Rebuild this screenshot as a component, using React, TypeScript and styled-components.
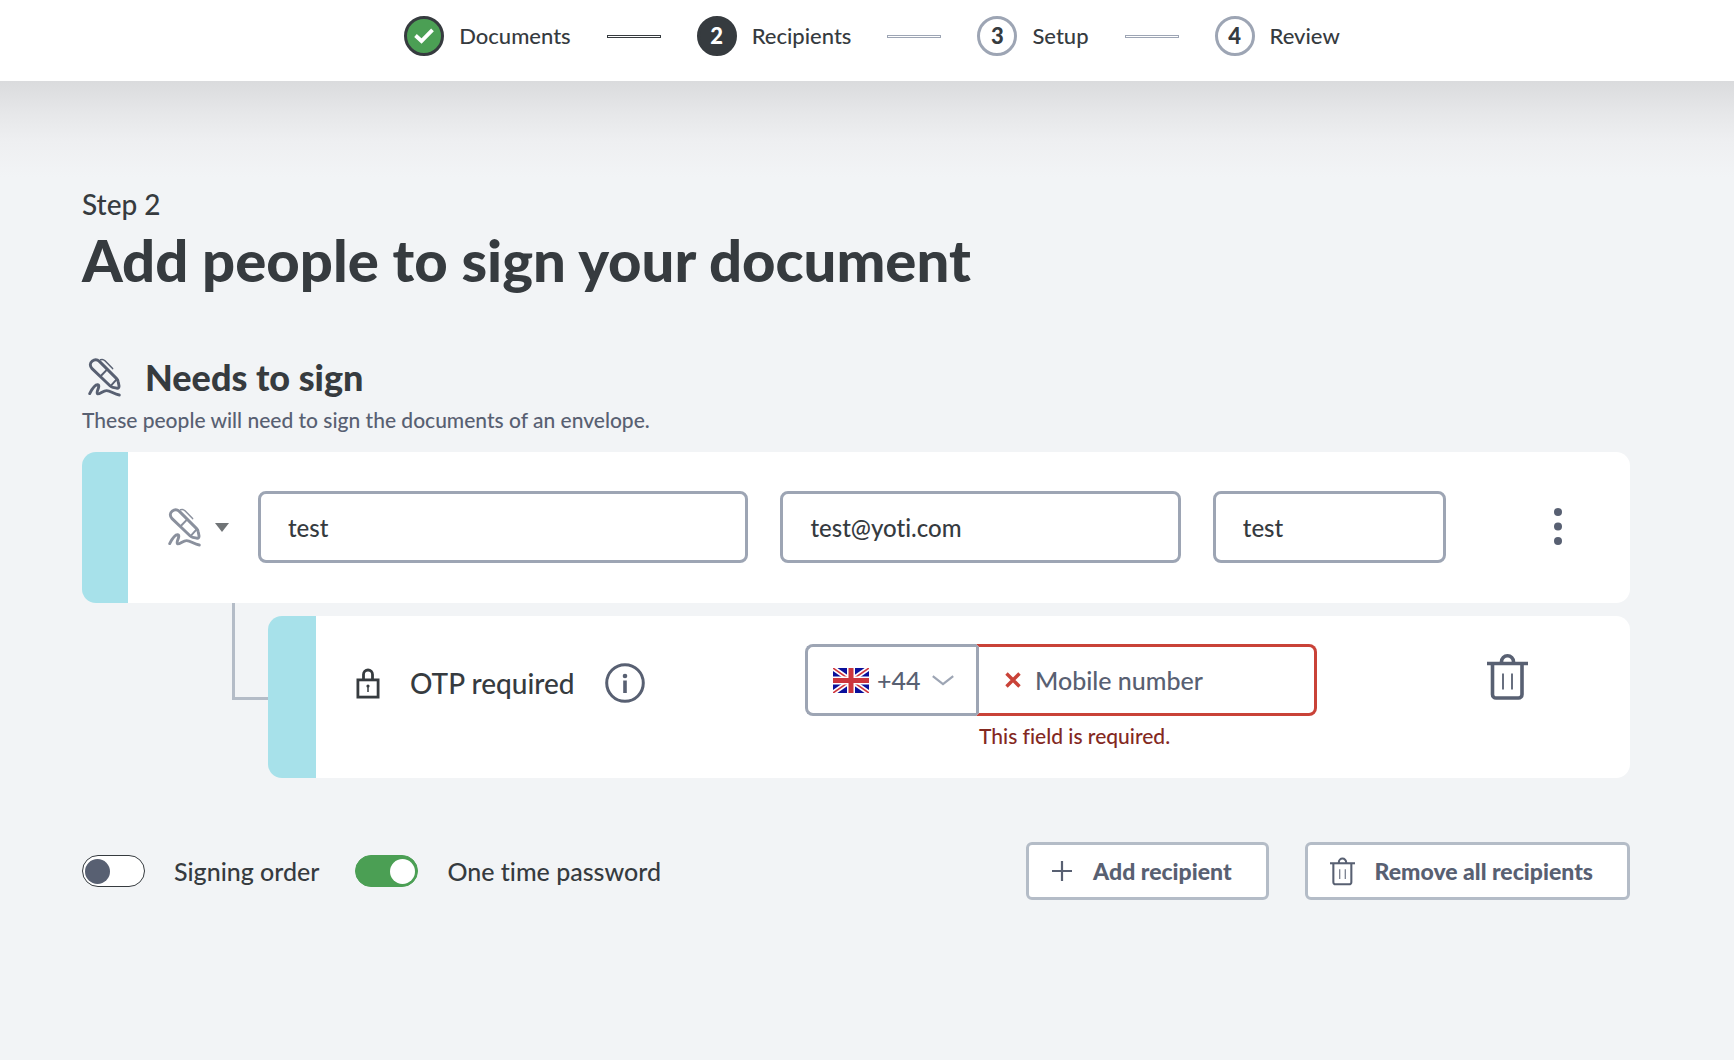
import React, { useState } from "react";
import styled, { createGlobalStyle, css } from "styled-components";

const ink = "#363b3f";
const slate = "#586072";
const line = "#9da5b4";
const softLine = "#b4bcc7";
const page = "#f2f4f6";
const cyan = "#a7e1ea";
const green = "#4b9f54";
const red = "#c94238";

const GlobalStyle = createGlobalStyle`
  *, *::before, *::after { box-sizing: border-box; }
  body {
    margin: 0;
    background: ${page};
    color: ${ink};
    font-family: Lato, "Open Sans", sans-serif;
    font-weight: 500;
    font-variant-ligatures: none;
  }
  button, input, select { font: inherit; font-variant-ligatures: none; color: inherit; }
`;

const Header = styled.header`
  display: flex;
  justify-content: center;
  background: #fff;
  padding: 16px 24px 25px 34px;
`;

const Steps = styled.ol`
  display: flex;
  align-items: center;
  gap: 36px;
  margin: 0;
  padding: 0;
  list-style: none;
`;

const Step = styled.li`
  display: flex;
  align-items: center;
  gap: 36px;
`;

const StepLink = styled.a`
  display: flex;
  align-items: center;
  gap: 15px;
  color: ${ink};
  font-size: 22px;
  line-height: 32px;
  text-decoration: none;
`;

type StepState = "done" | "current" | "todo";

const StepBadge = styled.span<{ $state: StepState }>`
  display: flex;
  align-items: center;
  justify-content: center;
  width: 40px;
  height: 40px;
  border: 3px solid ${(p) => (p.$state === "todo" ? line : ink)};
  border-radius: 50%;
  background: ${(p) => (p.$state === "done" ? green : p.$state === "current" ? ink : "#fff")};
  color: ${(p) => (p.$state === "current" ? "#fff" : ink)};
  font-weight: 900;
`;

const StepBar = styled.span<{ $passed: boolean }>`
  width: 54px;
  height: 3px;
  border: 1px solid ${(p) => (p.$passed ? ink : line)};
`;

const Main = styled.main`
  min-height: calc(100vh - 81px);
  padding: 103px 104px 104px 82px;
  background: linear-gradient(#dadbdd, #e6e7e9 32px, #eeeff1 60px, ${page} 96px);
`;

const Eyebrow = styled.p`
  margin: 0;
  font-size: 28px;
  line-height: 40px;
`;

const Title = styled.h1`
  margin: 0;
  font-size: 58px;
  font-weight: 900;
  line-height: 72px;
`;

const SectionHead = styled.div`
  display: flex;
  align-items: center;
  gap: 24px;
  margin-top: 56px;
  padding-left: 6px;
  color: ${slate};
`;

const SectionTitle = styled.h2`
  margin: 0;
  color: ${ink};
  font-size: 36px;
  font-weight: 900;
  line-height: 50px;
`;

const SectionText = styled.p`
  margin: 2px 0 16px;
  color: ${slate};
  font-size: 21px;
  line-height: 32px;
`;

const Card = styled.div<{ $accent: number }>`
  display: flex;
  flex: 1;
  border-left: ${(p) => p.$accent}px solid ${cyan};
  border-radius: 14px;
  background: #fff;
`;

const RecipientCard = styled(Card)`
  align-items: center;
  padding: 39px 48px 40px 40px;
`;

const IconButton = styled.button`
  display: flex;
  align-items: center;
  justify-content: center;
  gap: 14px;
  flex: none;
  padding: 0;
  border: 0;
  background: none;
  color: ${slate};
  cursor: pointer;
`;

const RoleButton = styled(IconButton)`
  color: #8a909d;
`;

const MoreButton = styled(IconButton)`
  width: 48px;
  height: 48px;
`;

const FieldRow = styled.div`
  display: grid;
  flex: 1;
  grid-template-columns: 490fr 400fr 233fr;
  gap: 32px;
  margin: 0 88px 0 29px;
`;

const fieldBox = css`
  height: 72px;
  border: 3px solid ${line};
  border-radius: 8px;
  background: #fff;
`;

const TextField = styled.input`
  ${fieldBox}
  width: 100%;
  min-width: 0;
  padding: 0 27px;
  font-size: 24px;
`;

const OtpRow = styled.div`
  display: flex;
  margin-left: 150px;
`;

const Connector = styled.div`
  flex: none;
  width: 36px;
  height: 97px;
  border: solid ${softLine};
  border-width: 0 0 3px 3px;
`;

const OtpCard = styled(Card)`
  align-items: flex-start;
  margin-top: 13px;
  padding: 28px 102px 26px 40px;
`;

const OtpName = styled.div`
  display: flex;
  align-items: center;
  gap: 30px;
  flex: 0 1 449px;
  height: 78px;
  font-size: 28px;
`;

const OtpTitle = styled.span`
  display: flex;
  align-items: center;
  gap: 30px;
  white-space: nowrap;
`;

const Phone = styled.div`
  display: grid;
  grid-template-columns: 171px minmax(0, 341px);
  flex: 0 1 512px;
  font-size: 25px;
`;

const CountryBox = styled.div`
  ${fieldBox}
  display: flex;
  align-items: center;
  gap: 8px;
  padding: 0 22px 0 25px;
  border-right: 0;
  border-radius: 8px 0 0 8px;
  color: ${slate};
`;

const CountrySelect = styled.select`
  flex: 1;
  min-width: 0;
  padding: 0;
  border: 0;
  background: none;
  appearance: none;
`;

const MobileBox = styled.div`
  ${fieldBox}
  display: flex;
  align-items: center;
  gap: 14px;
  padding-left: 26px;
  border-color: ${red};
  border-left-color: ${line};
  border-radius: 0 8px 8px 0;
`;

const MobileInput = styled.input`
  flex: 1;
  min-width: 0;
  padding: 0;
  border: 0;
  background: none;
  outline: none;
  &::placeholder { color: ${slate}; opacity: 1; }
`;

const ErrorText = styled.p`
  grid-column: 2;
  margin: 4px 0 0;
  padding-left: 3px;
  color: #84291f;
  font-size: 21px;
  line-height: 32px;
`;

const DeleteButton = styled(IconButton)`
  margin: 10px 0 0 auto;
`;

const Footer = styled.div`
  display: flex;
  align-items: center;
  gap: 36px;
  margin-top: 64px;
`;

const ToggleLabel = styled.label`
  display: flex;
  align-items: center;
  gap: 29px;
  font-size: 25px;
  line-height: 32px;
`;

const Toggle = styled.input`
  display: flex;
  align-items: center;
  width: 63px;
  height: 32px;
  margin: 0;
  padding: 0 2px;
  border: 1px solid ${ink};
  border-radius: 16px;
  background: #fff;
  appearance: none;
  cursor: pointer;
  &::before {
    content: "";
    width: 25px;
    height: 25px;
    border-radius: 50%;
    background: ${slate};
  }
  &:checked {
    justify-content: flex-end;
    border-color: ${green};
    background: ${green};
  }
  &:checked::before { background: #fff; }
`;

const Actions = styled.div`
  display: flex;
  gap: 36px;
  margin-left: auto;
`;

const ActionButton = styled.button`
  display: flex;
  align-items: center;
  gap: 20px;
  height: 58px;
  padding: 0 34px 0 22px;
  border: 3px solid ${softLine};
  border-radius: 6px;
  background: #fff;
  color: ${slate};
  font-size: 23px;
  font-weight: 900;
  white-space: nowrap;
  cursor: pointer;
`;

const PenIcon = () => (
  <svg width="33" height="39" viewBox="0 0 33 39" fill="none" stroke="currentColor" strokeWidth="2.9" strokeLinecap="round" strokeLinejoin="round" aria-hidden="true">
    <path d="M3.8 10.4C1.6 7.9 2 4.800 4.200 3.100 6.400 1.400 9.400 1.600 11.400 3.400L28.600 20.600C29.600 21.600 30 22.600 30.200 23.800L31 27.800C31.200 29.600 30.400 30.400 28.800 30.200L24.800 29.400C23.600 29.200 22.800 28.600 22 27.800Z" />
    <path d="M12.800 18 19.200 11.400M23 27.600 28.600 21.400" strokeWidth="2" />
    <path d="M12.600 1.800C14.400 1 15.800 1.600 17 2.800L24.600 10.600" strokeWidth="1.500" />
    <path d="M1.700 35.600C4.600 30 7.200 26.800 9.400 26.800 13.400 27.200 7.200 34.400 9.600 35.800 11.800 36.400 15 32.600 18.600 32.600 22.600 32.600 26 36.400 31.300 37" />
  </svg>
);

const TrashIcon = ({ width, height, stroke }: { width: number; height: number; stroke: number }) => (
  <svg width={width} height={height} viewBox="0 0 41 46" fill="none" stroke="currentColor" strokeWidth={stroke} aria-hidden="true">
    <path d="M0 9.5H41" />
    <path d="M14.5 9V7.8A6 6 0 0 1 26.500 7.800V9" />
    <path d="M5.500 10V40.500A3.500 3.500 0 0 0 9 44H31.500A3.500 3.500 0 0 0 35 40.500V10" />
    <path d="M16 19.500V35.500M25 19.500V35.500" strokeWidth={stroke / 2} />
  </svg>
);

const CheckIcon = () => (
  <svg width="20" height="16" viewBox="0 0 20 16" fill="none" stroke="#fff" strokeWidth="3.8" aria-hidden="true">
    <path d="M1.500 7.500 7.500 13 18.500 1.800" />
  </svg>
);

const CaretIcon = () => (
  <svg width="14" height="9" viewBox="0 0 14 9" fill="#707477" aria-hidden="true">
    <path d="M0 0H14L7 9Z" />
  </svg>
);

const DotsIcon = () => (
  <svg width="8" height="38" viewBox="0 0 8 38" fill="currentColor" aria-hidden="true">
    <circle cx="4" cy="4" r="4" />
    <circle cx="4" cy="18.500" r="4" />
    <circle cx="4" cy="33" r="4" />
  </svg>
);

const LockIcon = () => (
  <svg width="24" height="31" viewBox="0 0 24 31" fill="none" stroke={ink} strokeWidth="2.800" aria-hidden="true">
    <rect x="1.900" y="11.900" width="20.200" height="17.200" />
    <path d="M7.500 12V6.500A4.500 4.500 0 0 1 16.500 6.500V12" />
    <path d="M12 18V24" strokeWidth="1.500" />
    <circle cx="12" cy="18" r="1.600" fill={ink} stroke="none" />
  </svg>
);

const InfoIcon = () => (
  <svg width="40" height="40" viewBox="0 0 40 40" fill="none" stroke="currentColor" strokeWidth="3" aria-hidden="true">
    <circle cx="20" cy="20" r="18.300" />
    <path d="M20 17.500V30" strokeWidth="3.600" />
    <circle cx="20" cy="13" r="2.300" fill="currentColor" stroke="none" />
  </svg>
);

const FlagIcon = () => (
  <svg width="36" height="25" viewBox="0 0 36 25" aria-hidden="true">
    <rect width="36" height="25" fill="#0a109b" />
    <path d="M0 0 36 25M36 0 0 25" stroke="#fff" strokeWidth="5" />
    <path d="M0 0 36 25M36 0 0 25" stroke="#d0383f" strokeWidth="1.600" />
    <path d="M18 0V25M0 12.500H36" stroke="#fff" strokeWidth="8" />
    <path d="M18 0V25M0 12.500H36" stroke="#cc353c" strokeWidth="5" />
  </svg>
);

const ChevronIcon = () => (
  <svg width="22" height="11" viewBox="0 0 22 11" fill="none" stroke={line} strokeWidth="2.200" aria-hidden="true">
    <path d="M.8 1.200 11 9.200 21.200 1.200" />
  </svg>
);

const CrossIcon = () => (
  <svg width="16" height="16" viewBox="0 0 16 16" fill="none" stroke={red} strokeWidth="3.400" aria-hidden="true">
    <path d="M1.500 1.500 14.500 14.500M14.500 1.500 1.500 14.500" />
  </svg>
);

const PlusIcon = () => (
  <svg width="22" height="22" viewBox="0 0 22 22" fill="none" stroke="currentColor" strokeWidth="2.200" aria-hidden="true">
    <path d="M11 1V21M1 11H21" />
  </svg>
);

const steps: { name: string; state: StepState }[] = [
  { name: "Documents", state: "done" },
  { name: "Recipients", state: "current" },
  { name: "Setup", state: "todo" },
  { name: "Review", state: "todo" },
];

export default function App() {
  const [ordered, setOrdered] = useState(false);
  const [otp, setOtp] = useState(true);

  return (
    <>
      <GlobalStyle />
      <Header>
        <Steps>
          {steps.map((step, i) => (
            <Step key={step.name}>
              <StepLink href="#" aria-current={step.state === "current" ? "step" : undefined}>
                <StepBadge $state={step.state}>{step.state === "done" ? <CheckIcon /> : i + 1}</StepBadge>
                {step.name}
              </StepLink>
              {i < steps.length - 1 && <StepBar $passed={step.state === "done"} />}
            </Step>
          ))}
        </Steps>
      </Header>
      <Main>
        <Eyebrow>Step 2</Eyebrow>
        <Title>Add people to sign your document</Title>
        <SectionHead>
          <PenIcon />
          <SectionTitle>Needs to sign</SectionTitle>
        </SectionHead>
        <SectionText>These people will need to sign the documents of an envelope.</SectionText>

        <RecipientCard $accent={46}>
          <RoleButton type="button" aria-label="Recipient role">
            <PenIcon />
            <CaretIcon />
          </RoleButton>
          <FieldRow>
            <TextField aria-label="Full name" defaultValue="test" />
            <TextField aria-label="Email" type="email" defaultValue="test@yoti.com" />
            <TextField aria-label="Role" defaultValue="test" />
          </FieldRow>
          <MoreButton type="button" aria-label="More options">
            <DotsIcon />
          </MoreButton>
        </RecipientCard>

        <OtpRow>
          <Connector />
          <OtpCard $accent={48}>
            <OtpName>
              <OtpTitle>
                <LockIcon />
                OTP required
              </OtpTitle>
              <IconButton type="button" aria-label="About one time passwords">
                <InfoIcon />
              </IconButton>
            </OtpName>
            <Phone>
              <CountryBox>
                <FlagIcon />
                <CountrySelect aria-label="Country code" defaultValue="+44">
                  <option>+44</option>
                </CountrySelect>
                <ChevronIcon />
              </CountryBox>
              <MobileBox>
                <CrossIcon />
                <MobileInput type="tel" placeholder="Mobile number" aria-label="Mobile number" aria-invalid="true" aria-describedby="mobile-error" />
              </MobileBox>
              <ErrorText id="mobile-error">This field is required.</ErrorText>
            </Phone>
            <DeleteButton type="button" aria-label="Remove one time password">
              <TrashIcon width={41} height={46} stroke={3.6} />
            </DeleteButton>
          </OtpCard>
        </OtpRow>

        <Footer>
          <ToggleLabel>
            <Toggle type="checkbox" checked={ordered} onChange={() => setOrdered(!ordered)} />
            Signing order
          </ToggleLabel>
          <ToggleLabel>
            <Toggle type="checkbox" checked={otp} onChange={() => setOtp(!otp)} />
            One time password
          </ToggleLabel>
          <Actions>
            <ActionButton type="button">
              <PlusIcon />
              Add recipient
            </ActionButton>
            <ActionButton type="button">
              <TrashIcon width={25} height={29} stroke={3.4} />
              Remove all recipients
            </ActionButton>
          </Actions>
        </Footer>
      </Main>
    </>
  );
}
